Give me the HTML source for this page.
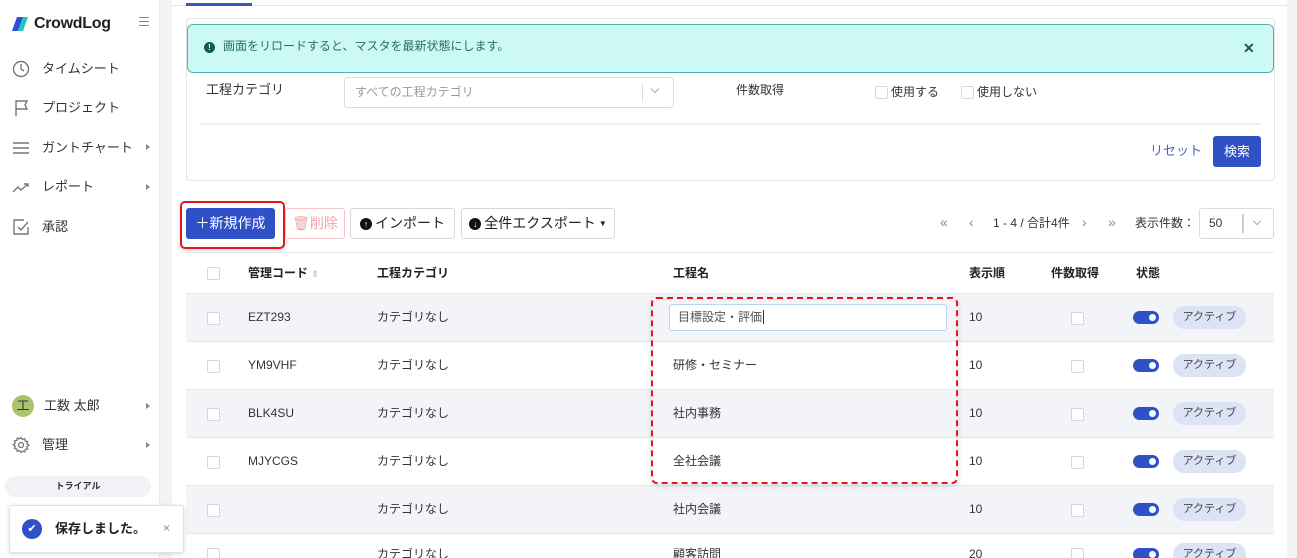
<!DOCTYPE html>
<html><head><meta charset="utf-8"><style>
*{box-sizing:border-box;margin:0;padding:0}
html{width:1297px;height:558px;overflow:hidden}
body{width:1297px;height:558px;overflow:hidden;background:#f3f4f6;font-family:"Liberation Sans","Noto Sans CJK JP",sans-serif;font-size:13px;color:#333;position:relative;line-height:1.2}
.abs{position:absolute}
.side{left:0;top:0;width:160px;height:558px;background:#fff;border-right:1px solid #e5e7eb}
.nav{left:12px;display:flex;align-items:center;font-size:13px;color:#333;height:18px}
.nav svg{margin-right:12px}
.arr{position:absolute;left:146px;width:0;height:0;border-left:4px solid #888;border-top:3px solid transparent;border-bottom:3px solid transparent}
.main{left:172px;top:0;width:1115px;height:558px;background:#fff}
.cb{width:13px;height:13px;border:1px solid #d5d8dd;background:#fff;border-radius:2px}
.btn{height:31px;border:1px solid #d5d8dd;border-radius:3px;background:#fff;display:flex;align-items:center;justify-content:center;font-size:14px;color:#222}
.row{left:186px;width:1088px;height:48px;border-bottom:1px solid #e5e7eb}
.row span{position:absolute;top:0;line-height:47px;font-size:12px;color:#333}
.tog{position:absolute;left:947px;top:17px;width:26px;height:13px;background:#3050c8;border-radius:7px}
.tog:after{content:"";position:absolute;right:3px;top:3px;width:7px;height:7px;border-radius:50%;background:#fff}
.pill{position:absolute;left:987px;top:12px;width:73px;height:23px;border-radius:12px;background:#dbe3f5;font-size:11px;color:#445;text-align:center;line-height:23px}
.rcb{position:absolute;left:21px;top:18px}
.ncb{position:absolute;left:885px;top:18px}
</style></head><body>
<div class="abs side">
 <div class="abs" style="left:12px;top:14px;display:flex;align-items:center;height:20px">
  <svg width="18" height="16" viewBox="0 0 18 16"><path d="M5 1h6L6 15H0z" fill="#2b4fd6"/><path d="M11 1h5l-5 14H6z" fill="#1fc7b8"/></svg>
  <span style="font-size:16px;font-weight:bold;color:#222;margin-left:4px;letter-spacing:-0.3px">CrowdLog</span>
 </div>
 <div class="abs" style="left:139px;top:17px;width:10px;height:9px;border-top:1.5px solid #888;border-bottom:1.5px solid #888"><div style="margin-top:2.5px;border-top:1.5px solid #888"></div></div>
 <div class="abs nav" style="top:60px"><svg width="18" height="18" viewBox="0 0 18 18" fill="none" stroke="#777" stroke-width="1.4"><circle cx="9" cy="9" r="7.5"/><path d="M9 4v5l3 2"/></svg>タイムシート</div>
 <div class="abs nav" style="top:99px"><svg width="18" height="18" viewBox="0 0 18 18" fill="none" stroke="#777" stroke-width="1.4"><path d="M4 17V2h11l-2 4 2 4H4"/></svg>プロジェクト</div>
 <div class="abs nav" style="top:139px"><svg width="18" height="18" viewBox="0 0 18 18" fill="none" stroke="#777" stroke-width="1.4"><path d="M1 4h16M1 9h16M1 14h16"/></svg>ガントチャート</div>
 <div class="arr" style="top:144px"></div>
 <div class="abs nav" style="top:178px"><svg width="18" height="18" viewBox="0 0 18 18" fill="none" stroke="#777" stroke-width="1.4"><path d="M1 14l5-5 3 3 7-6M12 6h4v3"/></svg>レポート</div>
 <div class="arr" style="top:184px"></div>
 <div class="abs nav" style="top:218px"><svg width="18" height="18" viewBox="0 0 18 18" fill="none" stroke="#777" stroke-width="1.4"><path d="M16 9v7H2V2h10M6 9l3 3 7-8"/></svg>承認</div>
 <div class="abs nav" style="top:397px"><div style="width:22px;height:22px;border-radius:50%;background:#a9c46c;color:#333;font-size:13px;text-align:center;line-height:22px;margin-right:10px">工</div>工数 太郎</div>
 <div class="arr" style="top:403px"></div>
 <div class="abs nav" style="top:436px"><svg width="18" height="18" viewBox="0 0 18 18" fill="none" stroke="#777" stroke-width="1.3"><circle cx="9" cy="9" r="2.5"/><path d="M9 1.5l1.5 2 2.3-.8.4 2.4 2.4.4-.8 2.3 2 1.5-2 1.5.8 2.3-2.4.4-.4 2.4-2.3-.8L9 16.5l-1.5-2-2.3.8-.4-2.4-2.4-.4.8-2.3-2-1.5 2-1.5-.8-2.3 2.4-.4.4-2.4 2.3.8z"/></svg>管理</div>
 <div class="arr" style="top:442px"></div>
 <div class="abs" style="left:5px;top:476px;width:146px;height:21px;border-radius:11px;background:#f1f2f5;font-size:9px;font-weight:bold;text-align:center;line-height:21px;color:#333">トライアル</div>
</div>
<div class="abs main"></div>
<div class="abs" style="left:172px;top:5px;width:1115px;border-top:1px solid #e5e7eb"></div>
<div class="abs" style="left:186px;top:3px;width:66px;height:3px;background:#3a55b8"></div>
<div class="abs" style="left:186px;top:18px;width:1089px;height:163px;border:1px solid #e3e5e9;border-radius:4px"></div>
<div class="abs" style="left:187px;top:24px;width:1087px;height:49px;background:#cdf9f5;border:1px solid #4fb3aa;border-radius:6px"></div>
<div class="abs" style="left:204px;top:42px;width:11px;height:11px;border-radius:50%;background:#135a52;color:#fff;font-size:8px;font-weight:bold;text-align:center;line-height:11px">!</div>
<div class="abs" style="left:223px;top:39px;font-size:12px;line-height:15px;color:#2a6e68">画面をリロードすると、マスタを最新状態にします。</div>
<div class="abs" style="left:1243px;top:40px;font-size:14px;font-weight:bold;color:#135a52">✕</div>
<div class="abs" style="left:206px;top:82px;font-size:13px;line-height:16px">工程カテゴリ</div>
<div class="abs" style="left:344px;top:77px;width:330px;height:31px;border:1px solid #d9dce0;border-radius:3px;font-size:12px;color:#999;padding:0 10px;line-height:29px">すべての工程カテゴリ</div>
<div class="abs" style="left:642px;top:83px;height:19px;border-left:1px solid #ddd"></div>
<div class="abs" style="left:652px;top:86px;width:6px;height:6px;border-right:1px solid #aaa;border-bottom:1px solid #aaa;transform:rotate(45deg)"></div>
<div class="abs" style="left:736px;top:83px;font-size:12px;line-height:15px">件数取得</div>
<div class="abs cb" style="left:875px;top:86px"></div><div class="abs" style="left:891px;top:85px;font-size:12px;line-height:15px">使用する</div>
<div class="abs cb" style="left:961px;top:86px"></div><div class="abs" style="left:977px;top:85px;font-size:12px;line-height:15px">使用しない</div>
<div class="abs" style="left:200px;top:123px;width:1061px;border-top:2px solid #eceef1"></div>
<div class="abs" style="left:1150px;top:143px;font-size:13px;line-height:16px;color:#4a64c0">リセット</div>
<div class="abs" style="left:1213px;top:136px;width:48px;height:31px;background:#3050c8;border-radius:3px;color:#fff;font-size:13px;text-align:center;line-height:31px">検索</div>

<div class="abs" style="left:180px;top:201px;width:105px;height:48px;border:2px solid #e8141c;border-radius:5px;box-shadow:0 2px 4px rgba(0,0,0,.15)"></div>
<div class="abs btn" style="left:186px;top:208px;width:89px;background:#3050c8;border-color:#3050c8;color:#fff">＋新規作成</div>
<div class="abs btn" style="left:285px;top:208px;width:60px;border-color:#f2c4c6;color:#f0a4a8">🗑削除</div>
<div class="abs btn" style="left:350px;top:208px;width:105px"><span style="display:inline-block;width:12px;height:12px;border-radius:50%;background:#111;color:#fff;font-size:9px;line-height:12px;text-align:center;margin-right:3px">↑</span>インポート</div>
<div class="abs btn" style="left:461px;top:208px;width:154px"><span style="display:inline-block;width:12px;height:12px;border-radius:50%;background:#111;color:#fff;font-size:9px;line-height:12px;text-align:center;margin-right:3px">↓</span>全件エクスポート <span style="font-size:8px;margin-left:3px">▼</span></div>
<div class="abs" style="left:940px;top:214px;font-size:14px;color:#888">«</div>
<div class="abs" style="left:969px;top:214px;font-size:14px;color:#888">‹</div>
<div class="abs" style="left:993px;top:216px;font-size:12px;line-height:15px;color:#333">1 - 4 / 合計4件</div>
<div class="abs" style="left:1082px;top:214px;font-size:14px;color:#888">›</div>
<div class="abs" style="left:1108px;top:214px;font-size:14px;color:#888">»</div>
<div class="abs" style="left:1135px;top:216px;font-size:12px;line-height:15px">表示件数：</div>
<div class="abs" style="left:1199px;top:208px;width:75px;height:31px;border:1px solid #d9dce0;border-radius:3px;font-size:12px;padding:0 9px;line-height:29px">50</div>
<div class="abs" style="left:1242px;top:214px;height:19px;border-left:2px solid #ccc"></div>
<div class="abs" style="left:1254px;top:218px;width:6px;height:6px;border-right:1px solid #aaa;border-bottom:1px solid #aaa;transform:rotate(45deg)"></div>

<div class="abs" style="left:186px;top:252px;width:1088px;height:42px;border-top:1px solid #e5e7eb;border-bottom:1px solid #e5e7eb;font-size:12px;font-weight:bold;color:#222;line-height:40px">
 <div class="cb rcb" style="top:14px"></div>
 <span class="abs" style="left:62px;top:0">管理コード <span style="color:#ccc;font-size:9px">⇕</span></span>
 <span class="abs" style="left:191px;top:0">工程カテゴリ</span>
 <span class="abs" style="left:487px;top:0">工程名</span>
 <span class="abs" style="left:783px;top:0">表示順</span>
 <span class="abs" style="left:865px;top:0">件数取得</span>
 <span class="abs" style="left:950px;top:0">状態</span>
</div>

<div class="abs row" style="top:294px;background:#f3f4f7"><div class="cb rcb"></div><span style="left:62px">EZT293</span><span style="left:191px">カテゴリなし</span><span style="left:783px">10</span><div class="cb ncb"></div><div class="tog"></div><div class="pill">アクティブ</div></div>
<div class="abs row" style="top:342px;background:#fff"><div class="cb rcb"></div><span style="left:62px">YM9VHF</span><span style="left:191px">カテゴリなし</span><span style="left:487px">研修・セミナー</span><span style="left:783px">10</span><div class="cb ncb"></div><div class="tog"></div><div class="pill">アクティブ</div></div>
<div class="abs row" style="top:390px;background:#f3f4f7"><div class="cb rcb"></div><span style="left:62px">BLK4SU</span><span style="left:191px">カテゴリなし</span><span style="left:487px">社内事務</span><span style="left:783px">10</span><div class="cb ncb"></div><div class="tog"></div><div class="pill">アクティブ</div></div>
<div class="abs row" style="top:438px;background:#fff"><div class="cb rcb"></div><span style="left:62px">MJYCGS</span><span style="left:191px">カテゴリなし</span><span style="left:487px">全社会議</span><span style="left:783px">10</span><div class="cb ncb"></div><div class="tog"></div><div class="pill">アクティブ</div></div>
<div class="abs row" style="top:486px;background:#f3f4f7"><div class="cb rcb"></div><span style="left:191px">カテゴリなし</span><span style="left:487px">社内会議</span><span style="left:783px">10</span><div class="cb ncb"></div><div class="tog"></div><div class="pill">アクティブ</div></div>
<div class="abs row" style="top:534px;height:24px;overflow:hidden;background:#fff;border-bottom:none"><div class="cb rcb" style="top:14px"></div><span style="left:191px;line-height:40px">カテゴリなし</span><span style="left:487px;line-height:40px">顧客訪問</span><span style="left:783px;line-height:40px">20</span><div class="cb ncb" style="top:14px"></div><div class="tog" style="top:14px"></div><div class="pill" style="top:9px">アクティブ</div></div>

<div class="abs" style="left:669px;top:304px;width:278px;height:27px;border:1px solid #b9d3f0;border-radius:3px;background:#fff;font-size:12px;color:#555;padding:0 8px;line-height:25px">目標設定・評価<span style="border-left:1px solid #333;margin-left:1px"></span></div>
<div class="abs" style="left:651px;top:297px;width:307px;height:187px;border:2px dashed #e8141c;border-radius:6px;box-shadow:0 2px 6px rgba(0,0,0,.12)"></div>

<div class="abs" style="left:9px;top:505px;width:175px;height:48px;background:#fff;border:1px solid #e0e2e6;border-radius:3px;box-shadow:0 1px 4px rgba(0,0,0,.15)">
 <div class="abs" style="left:12px;top:13px;width:20px;height:20px;border-radius:50%;background:#3050c8;color:#fff;font-size:11px;text-align:center;line-height:20px">✔</div>
 <div class="abs" style="left:45px;top:14px;font-size:13px;line-height:18px;font-weight:bold;color:#222">保存しました。</div>
 <div class="abs" style="left:153px;top:15px;font-size:12px;color:#888">×</div>
</div>
</body></html>
